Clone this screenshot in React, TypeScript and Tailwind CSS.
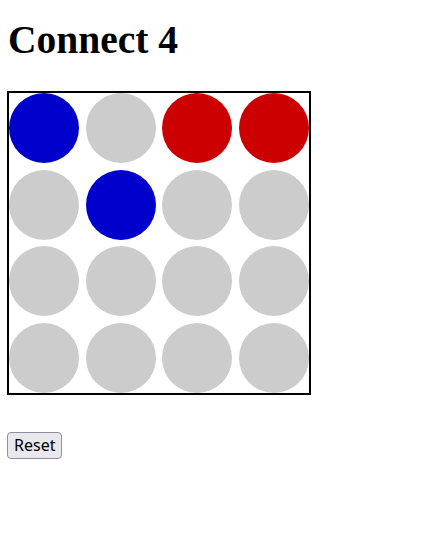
import React, { useState } from 'react';

type Cell = 0 | 1 | 2;

const initialBoard: Cell[][] = [
  [1, 0, 2, 2],
  [0, 1, 0, 0],
  [0, 0, 0, 0],
  [0, 0, 0, 0],
];

export default function App() {
  const [board, setBoard] = useState<Cell[][]>(initialBoard);

  const reset = () => setBoard(initialBoard.map((row) => row.map(() => 0 as Cell)));

  return (
    <div className="px-[7px] pt-[17px] bg-white min-h-[546px]">
      {/* Title */}
      <h1 className="font-['Liberation_Serif',serif] font-bold text-[39.5px] leading-[46px] text-black pl-px">
        Connect 4
      </h1>

      {/* Board */}
      <div className="mt-[28px] w-[304px] border-2 border-black grid grid-cols-4 gap-[6.67px]">
        {board.map((row, r) =>
          row.map((cell, c) => (
            <div
              key={`${r}-${c}`}
              className={
                'w-[70px] h-[70px] rounded-full ' +
                (cell === 1 ? 'bg-[#0000cc]' : cell === 2 ? 'bg-[#cc0000]' : 'bg-[#cccccc]')
              }
            />
          ))
        )}
      </div>

      {/* Controls */}
      <button
        onClick={reset}
        className="mt-[37px] h-[27px] px-[6px] border border-[#8f8f9d] rounded-[4px] bg-[#e9e9ed] font-['Noto_Sans',sans-serif] text-[16px] text-black leading-none"
      >
        Reset
      </button>
    </div>
  );
}
